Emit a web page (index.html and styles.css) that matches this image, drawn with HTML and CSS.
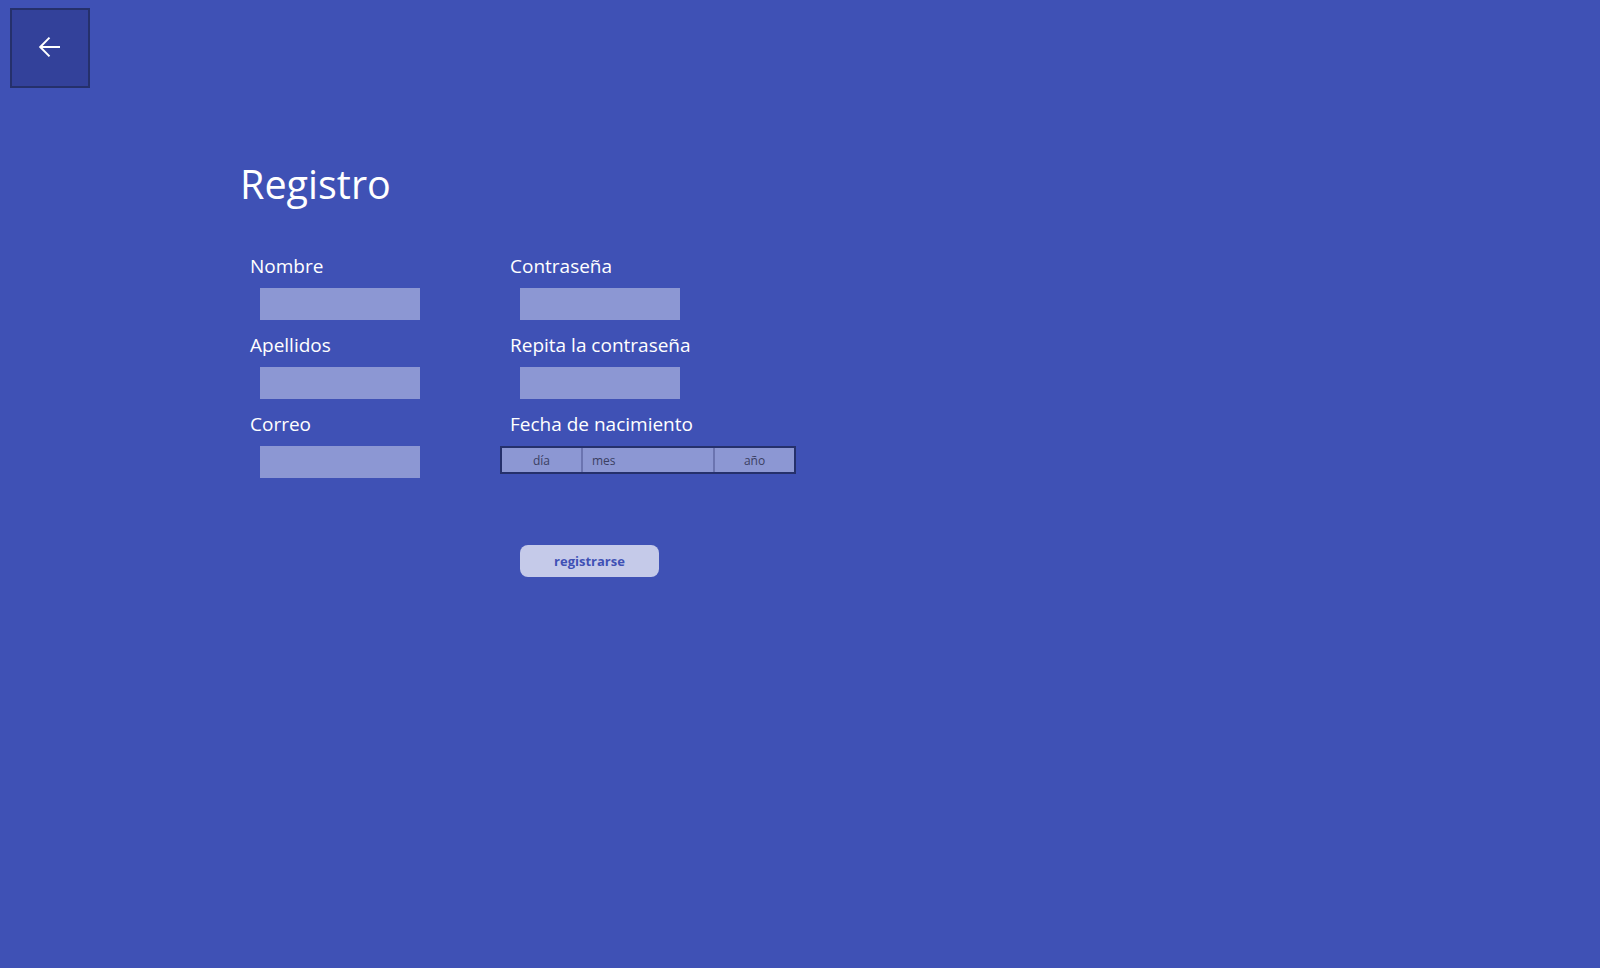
FILE: index.html
```html
<!DOCTYPE html>
<html lang="es">
<head>
<meta charset="utf-8">
<title>Registro</title>
<link rel="stylesheet" href="styles.css">
</head>
<body>
<div class="page">
  <button class="back" aria-label="Atrás">
    <svg width="24" height="24" viewBox="0 0 24 24"><path d="M22 12H2.8M11.5 2.6L2.2 12l9.3 9.4" fill="none" stroke="#fff" stroke-width="2"/></svg>
  </button>
  <h1 class="title">Registro</h1>
  <div class="form">
    <div class="col">
      <div class="field"><div class="label">Nombre</div><div class="input"></div></div>
      <div class="field"><div class="label">Apellidos</div><div class="input"></div></div>
      <div class="field"><div class="label">Correo</div><div class="input"></div></div>
    </div>
    <div class="col">
      <div class="field"><div class="label">Contraseña</div><div class="input"></div></div>
      <div class="field"><div class="label">Repita la contraseña</div><div class="input"></div></div>
      <div class="field"><div class="label">Fecha de nacimiento</div>
        <div class="date">
          <div class="part day">día</div>
          <div class="part month">mes</div>
          <div class="part year">año</div>
        </div>
      </div>
    </div>
  </div>
  <button class="submit">registrarse</button>
</div>
</body>
</html>
```
FILE: styles.css
```css
html, body {
  margin: 0;
  padding: 0;
  background: #3f51b5;
  height: 100%;
}
body {
  font-family: "Open Sans", "Noto Sans", sans-serif;
  color: #fff;
}
.page {
  display: flex;
  flex-direction: column;
  align-items: flex-start;
  padding: 8px 0 0 10px;
}
.back {
  width: 80px;
  height: 80px;
  box-sizing: border-box;
  background: #33419a;
  border: 2px solid #25306b;
  display: flex;
  align-items: center;
  justify-content: center;
  padding: 0 0 2px 0;
  margin: 0;
}
.title {
  margin: 72px 0 0 230px;
  font-size: 39.5px;
  line-height: 48px;
  font-weight: 400;
}
.form {
  display: flex;
  margin: 46px 0 0 240px;
}
.col {
  width: 260px;
  display: flex;
  flex-direction: column;
}
.field {
  display: flex;
  flex-direction: column;
  align-items: flex-start;
  height: 79px;
}
.label {
  font-size: 19px;
  line-height: 24px;
  margin-bottom: 10px;
}
.input {
  width: 160px;
  height: 32px;
  margin-left: 10px;
  background: #8c97d3;
}
.date {
  display: flex;
  width: 296px;
  height: 28px;
  box-sizing: border-box;
  margin-left: -10px;
  background: #8c97d3;
  border: 2px solid #25306b;
  font-size: 12px;
  color: #3b4062;
}
.part {
  display: flex;
  align-items: center;
}
.day {
  width: 79px;
  justify-content: center;
  border-right: 2px solid #6b74b0;
}
.month {
  width: 121px;
  padding-left: 9px;
  border-right: 2px solid #6b74b0;
}
.year {
  flex: 1;
  justify-content: center;
}
.submit {
  margin: 54px 0 0 510px;
  width: 139px;
  height: 32px;
  border: none;
  border-radius: 8px;
  background: #c5cae9;
  color: #3f51b5;
  font-family: "Open Sans", "Noto Sans", sans-serif;
  font-weight: 700;
  font-size: 13px;
  padding: 0;
}
```
